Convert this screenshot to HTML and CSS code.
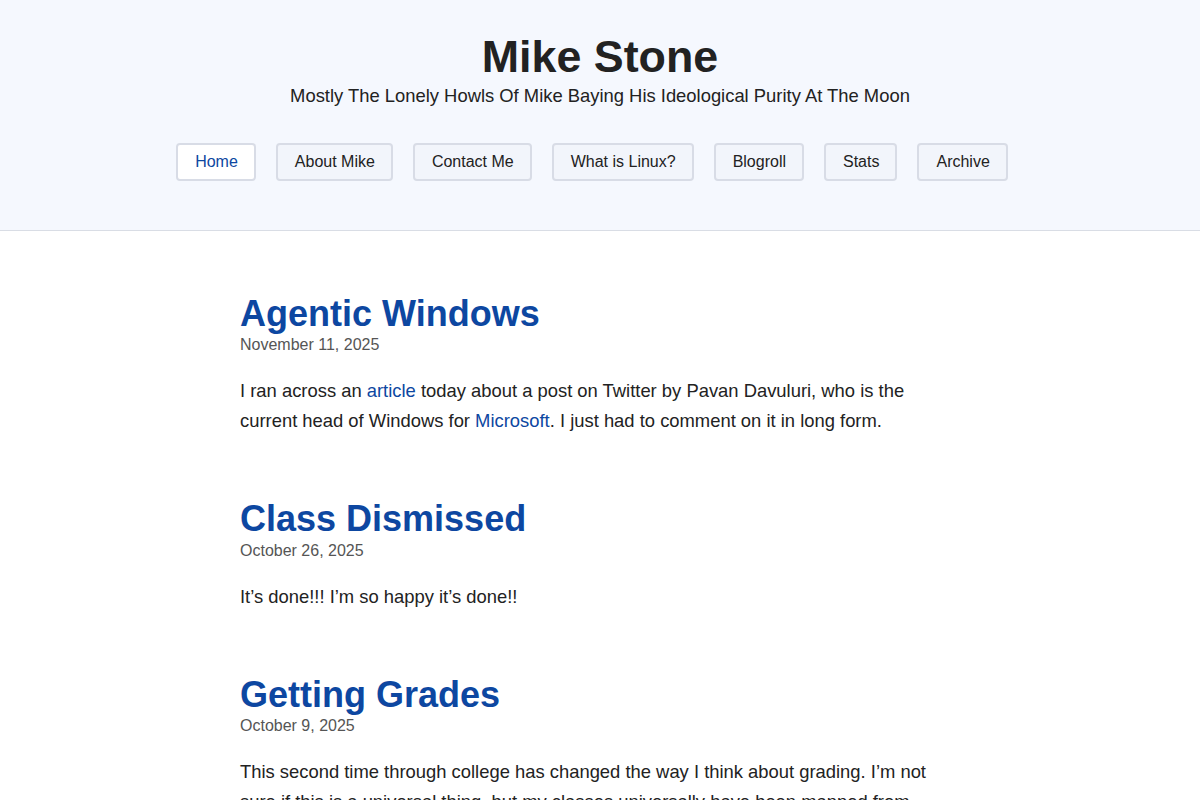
FILE: index.html
```html
<!DOCTYPE html>
<html lang="en">

<head>
    <meta charset="UTF-8">
    <meta name="viewport" content="width=device-width, initial-scale=1.0">
    <title>Mike Stone</title>
    <link rel="stylesheet" href="styles.css">
</head>

<body>
    <header class="site-header">
        <h1 class="site-title">Mike Stone</h1>
        <p class="site-tagline">Mostly The Lonely Howls Of Mike Baying His Ideological Purity At The Moon</p>
        <nav class="site-nav">
            <a href="#" class="nav-link active">Home</a>
            <a href="#" class="nav-link">About Mike</a>
            <a href="#" class="nav-link">Contact Me</a>
            <a href="#" class="nav-link">What is Linux?</a>
            <a href="#" class="nav-link">Blogroll</a>
            <a href="#" class="nav-link">Stats</a>
            <a href="#" class="nav-link">Archive</a>
        </nav>
    </header>

    <main class="posts">
        <article class="post">
            <h2 class="post-title"><a href="#">Agentic Windows</a></h2>
            <div class="post-date">November 11, 2025</div>
            <p>I ran across an <a href="#">article</a> today about a post on Twitter by Pavan Davuluri, who is the current head of Windows for <a href="#">Microsoft</a>. I just had to comment on it in long form.</p>
        </article>

        <article class="post">
            <h2 class="post-title"><a href="#">Class Dismissed</a></h2>
            <div class="post-date">October 26, 2025</div>
            <p>It’s done!!! I’m so happy it’s done!!</p>
        </article>

        <article class="post">
            <h2 class="post-title"><a href="#">Getting Grades</a></h2>
            <div class="post-date">October 9, 2025</div>
            <p>This second time through college has changed the way I think about grading. I’m not sure if this is a universal thing, but my classes universally have been mapped from letter grades to points, and I have some thoughts about it.</p>
        </article>
    </main>
</body>

</html>
```

FILE: styles.css
```css
body {
    margin: 0;
    padding: 0;
    background-color: #ffffff;
    color: #222222;
    font-family: "Liberation Sans", Arial, Helvetica, sans-serif;
}

a {
    color: #0d47a1;
    text-decoration: none;
}

/* Header */

.site-header {
    background-color: #f5f8fe;
    border-bottom: 1px solid #d9dde5;
    padding: 32px 20px 49px;
    text-align: center;
}

.site-title {
    margin: 0;
    font-size: 2.8rem;
    line-height: 1.1;
    color: #222222;
}

.site-tagline {
    margin: 3px 0 0;
    font-size: 1.15rem;
    line-height: 1.3;
}

.site-nav {
    display: flex;
    justify-content: center;
    gap: 20px;
    margin-top: 35px;
    padding-right: 16px;
}

.nav-link {
    display: block;
    padding: 7px 16px 7px 17px;
    font-size: 1rem;
    line-height: 20px;
    color: #222222;
    background-color: #f2f5fb;
    border: 2px solid #d8dce6;
    border-radius: 4px;
}

.nav-link.active {
    background-color: #ffffff;
    color: #0d47a1;
}

/* Posts */

.posts {
    width: 700px;
    margin: 0 auto;
    padding: 61px 20px 0 0;
}

.post {
    margin-bottom: 61px;
}

.post-title {
    margin: 0;
    font-size: 2.25rem;
    line-height: 1.2;
}

.post-date {
    font-size: 1rem;
    line-height: 19px;
    color: #555555;
}

.post p {
    margin: 22px 0 0;
    font-size: 1.15rem;
    line-height: 30px;
}
```
